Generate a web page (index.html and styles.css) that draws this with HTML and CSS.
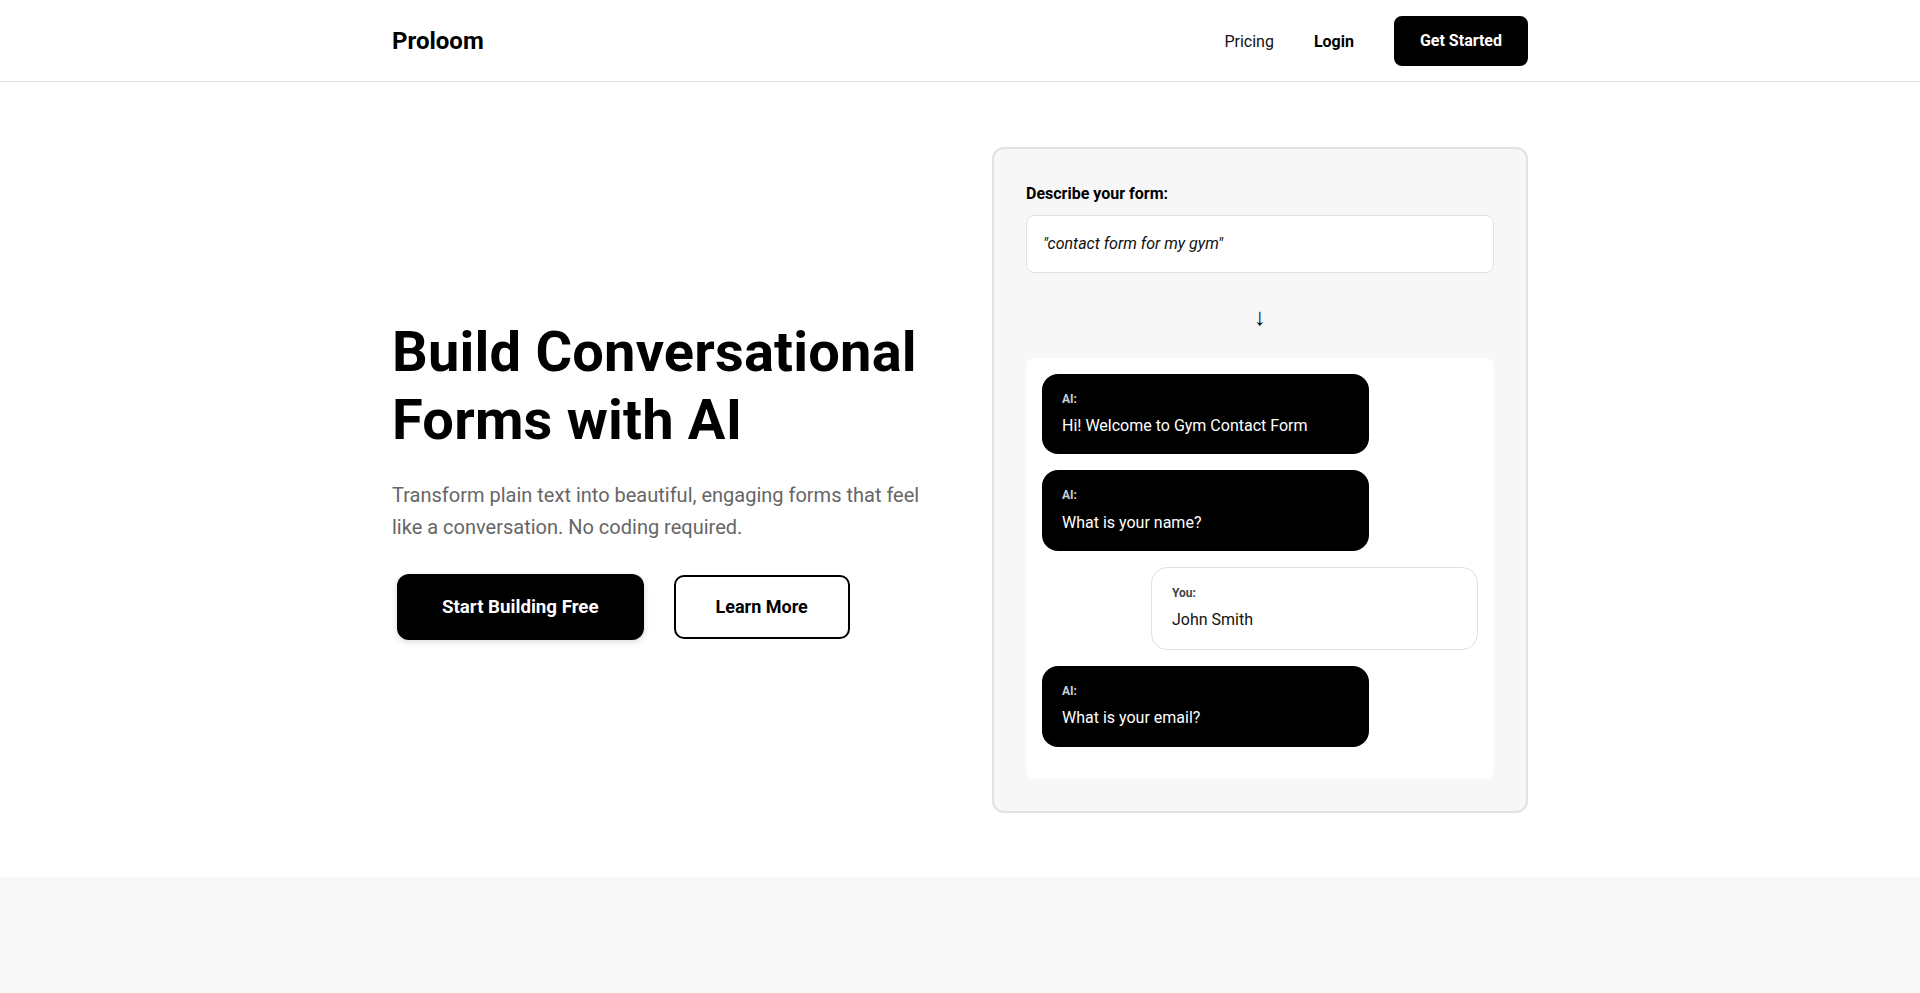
FILE: index.html
```html
<!DOCTYPE html>
<html lang="en">

<head>
  <meta charset="UTF-8">
  <meta name="viewport" content="width=device-width, initial-scale=1.0">
  <title>Proloom - Conversational Forms with AI</title>
  <link rel="stylesheet" href="styles.css">
</head>

<body>
  <header class="site-header">
    <div class="container nav">
      <a href="#" class="logo">Proloom</a>
      <nav class="nav-links">
        <a href="#" class="nav-link">Pricing</a>
        <a href="#" class="nav-link login">Login</a>
        <a href="#" class="btn btn-nav">Get Started</a>
      </nav>
    </div>
  </header>

  <section class="hero">
    <div class="container hero-grid">
      <div class="hero-text">
        <h1>Build Conversational Forms with AI</h1>
        <p class="lead">Transform plain text into beautiful, engaging forms that feel like a conversation. No coding required.</p>
        <div class="hero-actions">
          <a href="#" class="btn btn-primary">Start Building Free</a>
          <a href="#" class="btn btn-outline">Learn More</a>
        </div>
      </div>

      <div class="demo-card">
        <div class="demo-label">Describe your form:</div>
        <div class="demo-input">"contact form for my gym"</div>
        <div class="demo-arrow">↓</div>
        <div class="chat">
          <div class="msg msg-ai">
            <div class="msg-label">AI:</div>
            <div class="msg-text">Hi! Welcome to Gym Contact Form</div>
          </div>
          <div class="msg msg-ai">
            <div class="msg-label">AI:</div>
            <div class="msg-text">What is your name?</div>
          </div>
          <div class="msg msg-user">
            <div class="msg-label">You:</div>
            <div class="msg-text">John Smith</div>
          </div>
          <div class="msg msg-ai">
            <div class="msg-label">AI:</div>
            <div class="msg-text">What is your email?</div>
          </div>
        </div>
      </div>
    </div>
  </section>

  <section class="features"></section>
</body>

</html>
```

FILE: styles.css
```css
* {
  box-sizing: border-box;
}

body {
  font-family: Roboto, "Liberation Sans", Arial, sans-serif;
  margin: 0;
  padding: 0;
  background-color: #fff;
  color: #000;
}

a {
  color: inherit;
  text-decoration: none;
}

.container {
  max-width: 1200px;
  margin: 0 auto;
  padding: 0 2rem;
}

/* header */
.site-header {
  border-bottom: 1px solid #e5e5e5;
}

.nav {
  display: flex;
  justify-content: space-between;
  align-items: center;
  padding-top: 16px;
  padding-bottom: 15px;
}

.logo {
  font-size: 24px;
  font-weight: 700;
}

.nav-links {
  display: flex;
  align-items: center;
  gap: 40px;
}

.nav-link {
  font-size: 16px;
  color: #111;
}

.nav-link.login {
  font-weight: 700;
  color: #000;
}

.btn {
  display: inline-block;
  font-weight: 700;
  line-height: 1.2;
  text-align: center;
}

.btn-nav {
  background-color: #000;
  color: #fff;
  font-size: 16px;
  line-height: 20px;
  padding: 15px 26px;
  border-radius: 8px;
}

/* hero */
.hero {
  padding: 65px 0 64px;
}

.hero-grid {
  display: grid;
  grid-template-columns: 1fr 1fr;
  gap: 4rem;
  align-items: center;
}

.hero-text h1 {
  font-size: 56px;
  line-height: 1.2;
  font-weight: 700;
  letter-spacing: 0.2px;
  margin: 0 0 25px;
}

.lead {
  font-size: 20px;
  line-height: 1.6;
  color: #666;
  margin: 0 0 31px;
}

.hero-actions {
  display: flex;
  align-items: center;
  gap: 30px;
}

.btn-primary {
  margin-left: 5px;
  background-color: #000;
  color: #fff;
  font-size: 18.7px;
  padding: 22px 45px;
  border-radius: 12px;
  box-shadow: 0 2px 6px rgba(0, 0, 0, 0.15);
}

.btn-outline {
  border: 2px solid #000;
  color: #000;
  font-size: 18px;
  padding: 19px 40px;
  border-radius: 10px;
}

/* demo card */
.demo-card {
  background-color: #f7f7f7;
  border: 2px solid #e2e2e2;
  border-radius: 12px;
  padding: 32px;
}

.demo-label {
  font-size: 16px;
  font-weight: 700;
  line-height: 1.6;
  margin-bottom: 8px;
}

.demo-input {
  background-color: #fff;
  border: 1px solid #e0e0e0;
  border-radius: 8px;
  padding: 16px;
  font-size: 16px;
  font-style: italic;
  line-height: 1.5;
  color: #111;
}

.demo-arrow {
  text-align: center;
  font-size: 24px;
  line-height: 36px;
  margin: 26px 0 23px;
}

.chat {
  background-color: #fff;
  border-radius: 8px;
  padding: 16px;
}

.msg {
  max-width: 75%;
  padding: 16px 20px;
  border-radius: 16px;
  margin-bottom: 16px;
}

.msg-ai {
  background-color: #000;
  color: #fff;
}

.msg-user {
  margin-left: auto;
  background-color: #fff;
  border: 1px solid #e0e0e0;
  color: #111;
}

.msg-label {
  font-size: 12px;
  font-weight: 700;
  line-height: 1.6;
  margin-bottom: 4px;
  opacity: 0.8;
}

.msg-text {
  font-size: 16px;
  line-height: 1.6;
}

/* next section */
.features {
  background-color: #f8f8f8;
  height: 240px;
}
```
